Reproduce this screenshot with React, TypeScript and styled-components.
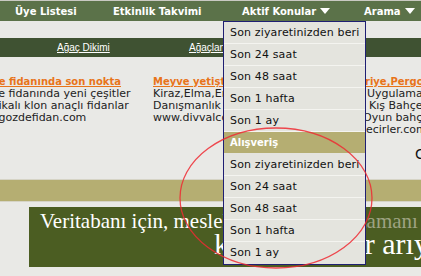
import React from "react";
import styled, { createGlobalStyle } from "styled-components";

const Global = createGlobalStyle`
  html, body { margin: 0; padding: 0; background: #e9e9e6; overflow: hidden; }
  body { width: 421px; height: 276px; font-family: "DejaVu Sans", Verdana, sans-serif; }
`;

const Page = styled.div`
  position: relative;
  width: 421px;
  height: 276px;
  overflow: hidden;
  background: #e9e9e6;
`;

const TopLine = styled.div`
  height: 1px;
  background: #c9c9c2;
`;

const NavBar = styled.nav`
  height: 20px;
  background: #5b7249;
  display: grid;
  grid-template-columns: 98px 129px 122px 1fr;
  padding-left: 15px;
  align-items: center;
  color: #fff;
  font: bold 10px "DejaVu Sans", Verdana, sans-serif;
`;

const NavItem = styled.div`
  display: flex;
  align-items: center;
  gap: 4px;
  white-space: nowrap;
`;

const Arrow = () => (
  <svg width="10" height="6" viewBox="0 0 10 6">
    <polygon points="0,0 10,0 5,6" fill="#fff" />
  </svg>
);

const SubBar = styled.div`
  margin-top: 17px;
  height: 19px;
  background: #3f5232;
  display: grid;
  grid-template-columns: 132px 1fr;
  padding-left: 57px;
  align-items: center;
  font: 10px "Liberation Sans", Arial, sans-serif;
  white-space: nowrap;
`;

const SubLink = styled.a`
  color: #fff;
  text-decoration: underline;
`;

const Content = styled.div`
  height: 122px;
  box-sizing: border-box;
  padding-top: 19px;
  display: grid;
  grid-template-columns: 184px 198px 1fr;
  margin-left: -31px;
  white-space: nowrap;
`;

const Column = styled.div`
  display: flex;
  flex-direction: column;
  font-size: 11px;
  line-height: 12px;
  color: #222;
`;

const Title = styled.a<{ $indent?: number }>`
  font-weight: bold;
  font-size: 10px;
  color: #e8741a;
  text-decoration: underline;
  padding-left: ${(p) => p.$indent ?? 0}px;
`;

const Line = styled.span<{ $indent?: number }>`
  padding-left: ${(p) => p.$indent ?? 0}px;
`;

const BigLetter = styled.span<{ $indent: number }>`
  margin-top: 11px;
  padding-left: ${(p) => p.$indent}px;
  font-size: 14px;
  line-height: 14px;
  color: #111;
`;

const KhakiBar = styled.div`
  height: 21px;
  background: #b5ae72;
  border-top: 1px solid #d6d4c6;
  border-bottom: 1px solid #d6d4c6;
`;

const BannerRow = styled.div`
  padding: 5px 0 0 29px;
`;

const Banner = styled.div`
  height: 60px;
  background: #4b5d22;
  overflow: hidden;
  padding-left: 11px;
  font-family: "Liberation Serif", "Times New Roman", serif;
  color: #fff;
  white-space: nowrap;
`;

const BannerLine1 = styled.div`
  font-size: 21px;
  line-height: 24px;
  padding-top: 2px;
`;

const Faded = styled.span`
  color: #9ea383;
`;

const BannerLine2 = styled.div`
  font-size: 30px;
  line-height: 22px;
  padding-left: 174px;
`;

const Dropdown = styled.ul`
  position: absolute;
  top: 21px;
  left: 223px;
  width: 141px;
  margin: 0;
  padding: 0;
  list-style: none;
  background: #e4e4de;
  border: 1px solid #1f1f73;
`;

const DropItem = styled.li`
  height: 21px;
  line-height: 21px;
  border-bottom: 1px solid #f4f4f0;
  padding-left: 6px;
  font-size: 11px;
  letter-spacing: 0.15px;
  color: #111;
  white-space: nowrap;
  &:last-child { border-bottom: none; height: 22px; }
`;

const DropHeader = styled.li`
  height: 21px;
  line-height: 21px;
  border-bottom: 1px solid #e4e4de;
  background: #b5ae72;
  padding-left: 6px;
  font-size: 10px;
  font-weight: bold;
  color: #fff;
`;

const Annotation = styled.svg`
  position: absolute;
  left: 0;
  top: 0;
  pointer-events: none;
`;

const periods = ["Son ziyaretinizden beri", "Son 24 saat", "Son 48 saat", "Son 1 hafta", "Son 1 ay"];

export default function App() {
  return (
    <Page>
      <Global />
      <TopLine />
      <NavBar>
        <NavItem>Üye Listesi</NavItem>
        <NavItem>Etkinlik Takvimi</NavItem>
        <NavItem>Aktif Konular <Arrow /></NavItem>
        <NavItem>Arama <Arrow /></NavItem>
      </NavBar>
      <SubBar>
        <SubLink>Ağaç Dikimi</SubLink>
        <SubLink>Ağaçlandırma</SubLink>
      </SubBar>
      <Content>
        <Column>
          <Title>Meyve fidanında son nokta</Title>
          <Line>Meyve fidanında yeni çeşitler</Line>
          <Line>Sertifikalı klon anaçlı fidanlar</Line>
          <Line>www.gozdefidan.com</Line>
        </Column>
        <Column>
          <Title>Meyve yetiştiriciliği</Title>
          <Line>Kiraz,Elma,Erik fidanları</Line>
          <Line>Danışmanlık hizmetleri</Line>
          <Line>www.divvalcom.com</Line>
        </Column>
        <Column>
          <Title>Seriye,Pergole</Title>
          <Line $indent={16}>Uygulamaları</Line>
          <Line $indent={18}>Kış Bahçeleri</Line>
          <Line $indent={12}>Oyun bahçeleri</Line>
          <Line $indent={15}>ecirler.com</Line>
          <BigLetter $indent={64}>C</BigLetter>
        </Column>
      </Content>
      <KhakiBar />
      <BannerRow>
        <Banner>
          <BannerLine1>
            Veritabanı için, mesleki bilgileri olan z<Faded>amanı</Faded>
          </BannerLine1>
          <BannerLine2>kararlı kişiler arıyoruz</BannerLine2>
        </Banner>
      </BannerRow>
      <Dropdown>
        {periods.map((p) => (
          <DropItem key={"a" + p}>{p}</DropItem>
        ))}
        <DropHeader>Alışveriş</DropHeader>
        {periods.map((p) => (
          <DropItem key={"b" + p}>{p}</DropItem>
        ))}
      </Dropdown>
      <Annotation width="421" height="276" viewBox="0 0 421 276">
        <ellipse cx="276" cy="198" rx="96" ry="70" fill="none" stroke="#ee2a33" strokeWidth="1.3" opacity="0.85" />
      </Annotation>
    </Page>
  );
}
